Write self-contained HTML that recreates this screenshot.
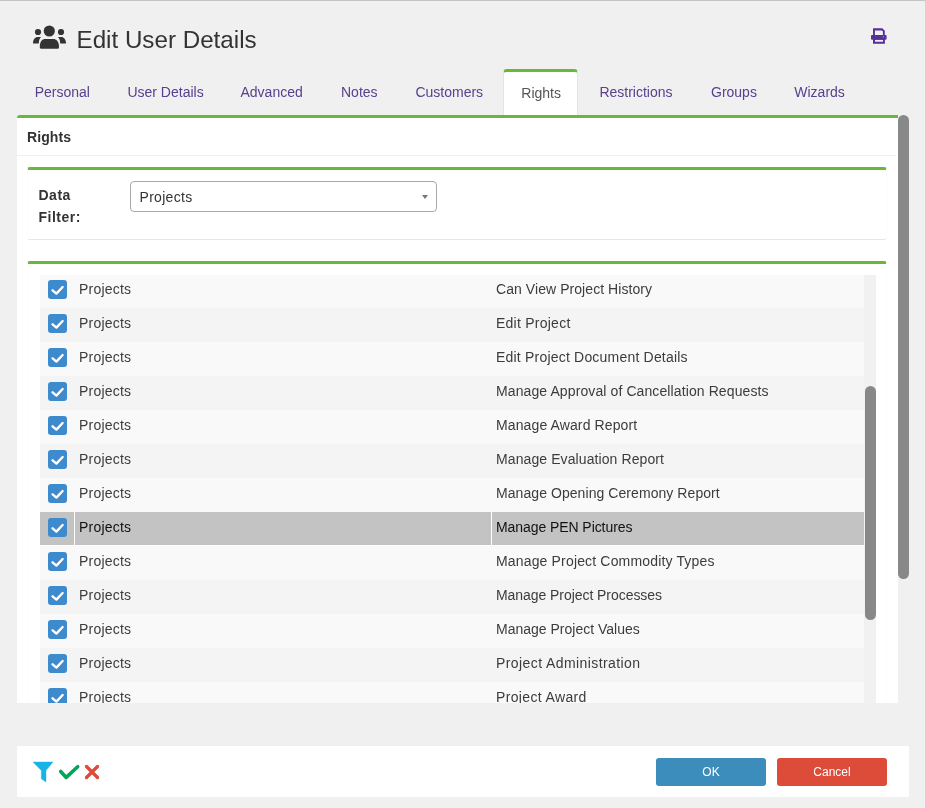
<!DOCTYPE html>
<html><head><meta charset="utf-8">
<style>
*{box-sizing:border-box;margin:0;padding:0}
html,body{will-change:transform;width:925px;height:808px;overflow:hidden;background:#f0f0f0;font-family:"Liberation Sans",sans-serif;color:#333;position:relative}
.abs{position:absolute}
#topline{left:0;top:0;width:925px;height:1px;background:#c4c4c4}
#title{left:76.5px;top:24.5px;font-size:24.2px;line-height:30px;color:#333;white-space:nowrap}
.tab{position:absolute;top:84px;font-size:14px;line-height:17px;color:#58408e;white-space:nowrap}
#activetab{left:503px;top:69px;width:75px;height:48px;background:#fff;border-top:3px solid #68b83f;border-left:1px solid #e4e4e4;border-right:1px solid #e4e4e4;border-radius:4px 4px 0 0}
#panel{left:17px;top:115px;width:881px;height:587.5px;background:#fff;border-top:3px solid #68b83f;border-radius:3px 0 0 0;overflow:hidden}
#vscroll{left:898px;top:115px;width:11px;height:464px;background:#888;border-radius:6px}
#rhead{left:27px;letter-spacing:0.1px;top:129px;font-size:14px;font-weight:bold;line-height:17px;color:#333}
#rheadline{left:17px;top:155px;width:879px;height:1px;background:#f0f0f0}
#filterpanel{left:27px;top:167px;width:860px;height:73px;border-top:3px solid #68b83f;border-bottom:1px solid #e6e6e6;border-left:1px solid #fbfbfb;border-right:1px solid #fbfbfb;border-radius:3px}
.lbl{position:absolute;left:38.5px;letter-spacing:0.5px;margin-top:1px;font-size:14px;font-weight:bold;line-height:17px;color:#333}
#select{left:130px;top:181px;width:307px;height:31px;border:1px solid #a9a9a9;border-radius:4px;background:#fff}
#seltext{left:139.5px;letter-spacing:0.3px;top:189px;font-size:14px;line-height:17px;color:#333}
#arrow{left:421.5px;top:195px;width:0;height:0;border-left:3.5px solid transparent;border-right:3.5px solid transparent;border-top:4px solid #777}
#gridpanel{left:27px;top:261px;width:860px;height:441.5px;border-top:3px solid #68b83f;border-left:1px solid #fcfcfc;border-right:1px solid #fcfcfc;border-radius:3px 3px 0 0}
#grid{left:40px;top:275px;width:824px;height:427.5px;overflow:hidden;background:#fff}
.row{position:absolute;left:0;width:824px;height:34px}
.row.l{background:#f9f9f9}
.row.d{background:#f4f4f4}
.row.sel{background:#c3c3c3;height:33px}
.row.sel .div1,.row.sel .div2{display:block;height:33px}
.row .div1{display:none;position:absolute;left:34px;top:0;width:1px;height:34px;background:#fff}
.row .div2{display:none;position:absolute;left:451px;top:0;width:1px;height:34px;background:#fff}
.cb{position:absolute;left:8px;top:6px;width:19px;height:19px;background:#3d8bcd;border-radius:3px}
.cb svg{position:absolute;left:0;top:0}
.c2{position:absolute;left:39px;letter-spacing:0.2px;top:7px;font-size:14px;line-height:17px;color:#3c3c3c;white-space:nowrap}
.c3{position:absolute;left:456px;top:7px;font-size:14px;line-height:17px;color:#3c3c3c;white-space:nowrap}
.sel .c2,.sel .c3{color:#111}
#itrack{left:864px;top:275px;width:12px;height:427.5px;background:#f1f1f1}
#ithumb{left:865px;top:386px;width:11px;height:234px;background:#888;border-radius:6px}
#footer{left:17px;top:746px;width:892px;height:51px;background:#fff}
.btn{position:absolute;top:758px;width:110px;height:28px;border-radius:3px;color:#fff;font-size:12px;line-height:28px;text-align:center}
#ok{left:656px;background:#3c8dbc}
#cancel{left:777px;background:#dd4b39}
</style></head>
<body>
<div id="topline" class="abs"></div>
<svg class="abs" style="left:32px;top:24px" width="36" height="26" viewBox="0 0 36 26">
  <circle cx="6" cy="8" r="3.1" fill="#333"/>
  <circle cx="17.3" cy="7" r="5.6" fill="#333"/>
  <circle cx="29" cy="8" r="3.1" fill="#333"/>
  <path d="M1 19.5 C1 15.5 3 13 6 13 L9 13 C7.5 14.5 6.8 16.5 6.8 19.5 Z" fill="#333"/>
  <path d="M34 19.5 C34 15.5 32 13 29 13 L26 13 C27.5 14.5 28.2 16.5 28.2 19.5 Z" fill="#333"/>
  <path d="M7.8 23 C7.8 17.5 10 15 13.5 15 L21 15 C24.5 15 27 17.5 27 23 C27 24 26.5 24.8 25.5 24.8 L9.3 24.8 C8.3 24.8 7.8 24 7.8 23 Z" fill="#333"/>
</svg>
<div id="title" class="abs">Edit User Details</div>
<svg class="abs" style="left:870px;top:27px" width="18" height="18" viewBox="0 0 18 18">
  <path d="M3 1.2 H12.3 L14.8 3.7 V8.5 H12.9 V4.4 L11.9 3.4 H4.9 V8.5 H3 Z" fill="#56309a"/>
  <rect x="1" y="7.9" width="15.6" height="4.8" rx="1" fill="#56309a"/>
  <circle cx="13.4" cy="9.7" r="0.8" fill="#9c7fd0"/>
  <path d="M3 12 H14.9 V16.7 H3 Z M5 12.7 V14.7 H13 V12.7 Z" fill="#56309a" fill-rule="evenodd"/>
</svg>

<div id="activetab" class="abs"></div>
<div class="tab" style="left:34.7px">Personal</div>
<div class="tab" style="left:127.4px">User Details</div>
<div class="tab" style="left:240.5px">Advanced</div>
<div class="tab" style="left:341px">Notes</div>
<div class="tab" style="left:415.4px">Customers</div>
<div class="tab" style="left:521.3px;top:85.3px;color:#555">Rights</div>
<div class="tab" style="left:599.4px">Restrictions</div>
<div class="tab" style="left:711px">Groups</div>
<div class="tab" style="left:794.3px">Wizards</div>

<div id="panel" class="abs"></div>
<div id="vscroll" class="abs"></div>
<div id="rhead" class="abs">Rights</div>
<div id="rheadline" class="abs"></div>

<div id="filterpanel" class="abs"></div>
<div class="lbl" style="top:186px">Data</div>
<div class="lbl" style="top:208px">Filter:</div>
<div id="select" class="abs"></div>
<div id="seltext" class="abs">Projects</div>
<div id="arrow" class="abs"></div>

<div id="gridpanel" class="abs"></div>
<div id="grid" class="abs">
<div class="row l" style="top:-1px"><div class="div1"></div><div class="div2"></div><div class="cb"><svg width="19" height="19" viewBox="0 0 19 19"><path d="M4.6 10.3 L8.4 13.6 L14.6 7" fill="none" stroke="#fff" stroke-width="2.4" stroke-linecap="round" stroke-linejoin="round"/></svg></div><div class="c2">Projects</div><div class="c3" style="letter-spacing:0.065px">Can View Project History</div></div>
<div class="row d" style="top:33px"><div class="div1"></div><div class="div2"></div><div class="cb"><svg width="19" height="19" viewBox="0 0 19 19"><path d="M4.6 10.3 L8.4 13.6 L14.6 7" fill="none" stroke="#fff" stroke-width="2.4" stroke-linecap="round" stroke-linejoin="round"/></svg></div><div class="c2">Projects</div><div class="c3" style="letter-spacing:0.245px">Edit Project</div></div>
<div class="row l" style="top:67px"><div class="div1"></div><div class="div2"></div><div class="cb"><svg width="19" height="19" viewBox="0 0 19 19"><path d="M4.6 10.3 L8.4 13.6 L14.6 7" fill="none" stroke="#fff" stroke-width="2.4" stroke-linecap="round" stroke-linejoin="round"/></svg></div><div class="c2">Projects</div><div class="c3" style="letter-spacing:0.2px">Edit Project Document Details</div></div>
<div class="row d" style="top:101px"><div class="div1"></div><div class="div2"></div><div class="cb"><svg width="19" height="19" viewBox="0 0 19 19"><path d="M4.6 10.3 L8.4 13.6 L14.6 7" fill="none" stroke="#fff" stroke-width="2.4" stroke-linecap="round" stroke-linejoin="round"/></svg></div><div class="c2">Projects</div><div class="c3" style="letter-spacing:0.103px">Manage Approval of Cancellation Requests</div></div>
<div class="row l" style="top:135px"><div class="div1"></div><div class="div2"></div><div class="cb"><svg width="19" height="19" viewBox="0 0 19 19"><path d="M4.6 10.3 L8.4 13.6 L14.6 7" fill="none" stroke="#fff" stroke-width="2.4" stroke-linecap="round" stroke-linejoin="round"/></svg></div><div class="c2">Projects</div><div class="c3" style="letter-spacing:0.117px">Manage Award Report</div></div>
<div class="row d" style="top:169px"><div class="div1"></div><div class="div2"></div><div class="cb"><svg width="19" height="19" viewBox="0 0 19 19"><path d="M4.6 10.3 L8.4 13.6 L14.6 7" fill="none" stroke="#fff" stroke-width="2.4" stroke-linecap="round" stroke-linejoin="round"/></svg></div><div class="c2">Projects</div><div class="c3" style="letter-spacing:0.096px">Manage Evaluation Report</div></div>
<div class="row l" style="top:203px"><div class="div1"></div><div class="div2"></div><div class="cb"><svg width="19" height="19" viewBox="0 0 19 19"><path d="M4.6 10.3 L8.4 13.6 L14.6 7" fill="none" stroke="#fff" stroke-width="2.4" stroke-linecap="round" stroke-linejoin="round"/></svg></div><div class="c2">Projects</div><div class="c3" style="letter-spacing:0.066px">Manage Opening Ceremony Report</div></div>
<div class="row sel" style="top:237px"><div class="div1"></div><div class="div2"></div><div class="cb"><svg width="19" height="19" viewBox="0 0 19 19"><path d="M4.6 10.3 L8.4 13.6 L14.6 7" fill="none" stroke="#fff" stroke-width="2.4" stroke-linecap="round" stroke-linejoin="round"/></svg></div><div class="c2">Projects</div><div class="c3" style="letter-spacing:-0.072px">Manage PEN Pictures</div></div>
<div class="row l" style="top:271px"><div class="div1"></div><div class="div2"></div><div class="cb"><svg width="19" height="19" viewBox="0 0 19 19"><path d="M4.6 10.3 L8.4 13.6 L14.6 7" fill="none" stroke="#fff" stroke-width="2.4" stroke-linecap="round" stroke-linejoin="round"/></svg></div><div class="c2">Projects</div><div class="c3" style="letter-spacing:0.162px">Manage Project Commodity Types</div></div>
<div class="row d" style="top:305px"><div class="div1"></div><div class="div2"></div><div class="cb"><svg width="19" height="19" viewBox="0 0 19 19"><path d="M4.6 10.3 L8.4 13.6 L14.6 7" fill="none" stroke="#fff" stroke-width="2.4" stroke-linecap="round" stroke-linejoin="round"/></svg></div><div class="c2">Projects</div><div class="c3" style="letter-spacing:-0.057px">Manage Project Processes</div></div>
<div class="row l" style="top:339px"><div class="div1"></div><div class="div2"></div><div class="cb"><svg width="19" height="19" viewBox="0 0 19 19"><path d="M4.6 10.3 L8.4 13.6 L14.6 7" fill="none" stroke="#fff" stroke-width="2.4" stroke-linecap="round" stroke-linejoin="round"/></svg></div><div class="c2">Projects</div><div class="c3" style="letter-spacing:0.005px">Manage Project Values</div></div>
<div class="row d" style="top:373px"><div class="div1"></div><div class="div2"></div><div class="cb"><svg width="19" height="19" viewBox="0 0 19 19"><path d="M4.6 10.3 L8.4 13.6 L14.6 7" fill="none" stroke="#fff" stroke-width="2.4" stroke-linecap="round" stroke-linejoin="round"/></svg></div><div class="c2">Projects</div><div class="c3" style="letter-spacing:0.414px">Project Administration</div></div>
<div class="row l" style="top:407px"><div class="div1"></div><div class="div2"></div><div class="cb"><svg width="19" height="19" viewBox="0 0 19 19"><path d="M4.6 10.3 L8.4 13.6 L14.6 7" fill="none" stroke="#fff" stroke-width="2.4" stroke-linecap="round" stroke-linejoin="round"/></svg></div><div class="c2">Projects</div><div class="c3" style="letter-spacing:0.35px">Project Award</div></div>
</div>
<div id="itrack" class="abs"></div>
<div id="ithumb" class="abs"></div>

<div id="footer" class="abs"></div>
<svg class="abs" style="left:32px;top:761px" width="70" height="22" viewBox="0 0 70 22">
  <path d="M1 1 H21 L14 9.5 V21 L9.3 17.8 V9.5 Z" fill="#17b3e6" stroke="#17b3e6" stroke-width="0.4" stroke-linejoin="round"/>
  <path d="M28.7 10.5 L34.2 16.4 L45.7 5.7" fill="none" stroke="#00a65a" stroke-width="3.6" stroke-linecap="round" stroke-linejoin="round"/>
  <path d="M54.5 5.5 L65.5 16.5 M65.5 5.5 L54.5 16.5" fill="none" stroke="#dd4b39" stroke-width="3.4" stroke-linecap="round"/>
</svg>
<div id="ok" class="btn">OK</div>
<div id="cancel" class="btn">Cancel</div>
</body></html>
